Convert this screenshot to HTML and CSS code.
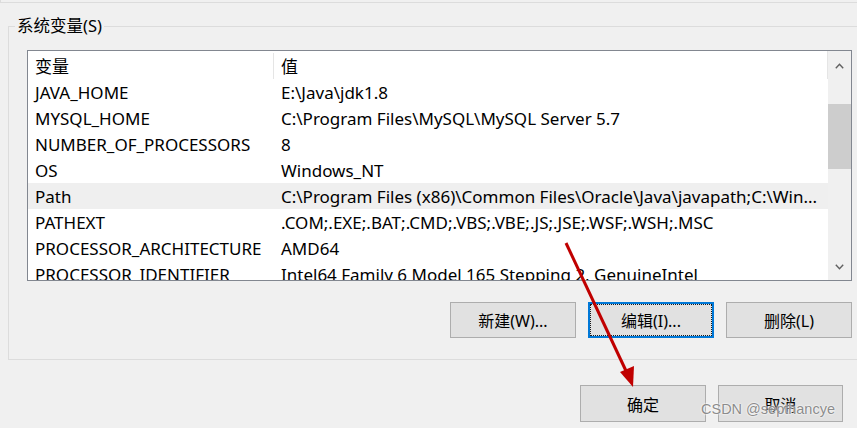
FILE: index.html
```
<!DOCTYPE html>
<html lang="zh-CN">
<head>
    <meta charset="UTF-8">
    <title>环境变量</title>
    <link rel="stylesheet" href="styles.css">
</head>
<body>
    <div class="prev-group"></div>

    <fieldset class="group">
        <legend>系统变量(S)</legend>

        <div class="listbox">
            <div class="list">
                <div class="row head">
                    <div class="cell name">变量</div>
                    <div class="cell value">值</div>
                </div>
                <div class="row"><div class="cell name">JAVA_HOME</div><div class="cell value">E:\Java\jdk1.8</div></div>
                <div class="row"><div class="cell name">MYSQL_HOME</div><div class="cell value">C:\Program Files\MySQL\MySQL Server 5.7</div></div>
                <div class="row"><div class="cell name">NUMBER_OF_PROCESSORS</div><div class="cell value">8</div></div>
                <div class="row"><div class="cell name">OS</div><div class="cell value">Windows_NT</div></div>
                <div class="row selected"><div class="cell name">Path</div><div class="cell value">C:\Program Files (x86)\Common Files\Oracle\Java\javapath;C:\Win...</div></div>
                <div class="row"><div class="cell name">PATHEXT</div><div class="cell value">.COM;.EXE;.BAT;.CMD;.VBS;.VBE;.JS;.JSE;.WSF;.WSH;.MSC</div></div>
                <div class="row"><div class="cell name">PROCESSOR_ARCHITECTURE</div><div class="cell value">AMD64</div></div>
                <div class="row"><div class="cell name">PROCESSOR_IDENTIFIER</div><div class="cell value">Intel64 Family 6 Model 165 Stepping 2, GenuineIntel</div></div>
            </div>
            <div class="scrollbar">
                <div class="arrow up">
                    <svg width="9" height="6" viewBox="0 0 9 6"><polyline points="0.8,5.2 4.5,1.3 8.2,5.2" fill="none" stroke="#606060" stroke-width="1.4"/></svg>
                </div>
                <div class="thumb"></div>
                <div class="track"></div>
                <div class="arrow down">
                    <svg width="9" height="6" viewBox="0 0 9 6"><polyline points="0.8,0.8 4.5,4.7 8.2,0.8" fill="none" stroke="#606060" stroke-width="1.4"/></svg>
                </div>
            </div>
        </div>

        <div class="buttons">
            <button class="btn">新建(W)...</button>
            <button class="btn focused">编辑(I)...</button>
            <button class="btn">删除(L)</button>
        </div>
    </fieldset>

    <div class="buttons dialog-buttons">
        <button class="btn">确定</button>
        <button class="btn">取消</button>
    </div>

    <!-- annotation arrow drawn on top of the screenshot -->
    <svg class="annotation" width="857" height="428" viewBox="0 0 857 428">
        <line x1="566" y1="243" x2="627" y2="373" stroke="#c00000" stroke-width="3"/>
        <polygon points="633,387 620,372 634,366" fill="#c00000"/>
    </svg>

    <div class="watermark">CSDN @septhancye</div>
</body>
</html>
```

FILE: styles.css
```
* {
    margin: 0;
    padding: 0;
    box-sizing: border-box;
}

body {
    position: relative;
    width: 857px;
    height: 428px;
    overflow: hidden;
    background-color: #f0f0f0;
    color: #000;
    font-family: "Noto Sans", "Noto Sans CJK SC", sans-serif;
    font-size: 16px;
}

.prev-group {
    height: 3px;
    border-bottom: 1px solid #dcdcdc;
    border-left: 1px solid #dcdcdc;
}

.group {
    margin: 12px -4px 0 8px;
    padding: 0 0 21px 18px;
    border: 1px solid #dcdcdc;
}

.group legend {
    margin-left: -12px;
    padding: 0 2px;
    font-size: 16.5px;
    line-height: 22px;
}

.listbox {
    display: flex;
    width: 825px;
    height: 231px;
    margin-top: 13px;
    background-color: #fff;
    border: 1px solid #828790;
}

.list {
    flex: 1;
    overflow: hidden;
    font-size: 17px;
}

.row {
    display: flex;
    height: 26px;
    align-items: center;
    white-space: nowrap;
}

.row.head {
    height: 28px;
    padding-top: 2px;
    border-right: 1px solid #e5e5e5;
}

.row.head .name {
    border-right: 1px solid #e5e5e5;
}

.row.selected {
    background-color: #efefef;
}

.cell {
    padding: 1px 0 0 7px;
    line-height: 25px;
}

.cell.name {
    width: 246px;
    flex-shrink: 0;
}

.cell.value {
    flex: 1;
}

.scrollbar {
    width: 23px;
    display: flex;
    flex-direction: column;
    background-color: #f0f0f0;
}

.arrow {
    display: flex;
    align-items: center;
    justify-content: center;
}

.arrow.up {
    height: 30px;
}

.arrow.down {
    height: 26px;
}

.thumb {
    height: 65px;
    margin-top: 23px;
    background-color: #cdcdcd;
}

.track {
    flex: 1;
}

.buttons {
    display: flex;
    justify-content: flex-end;
    gap: 12px;
    margin-top: 21px;
    width: 825px;
}

.btn {
    width: 126px;
    height: 36px;
    background-color: #e1e1e1;
    border: 1px solid #adadad;
    font-family: "Noto Sans", "Noto Sans CJK SC", sans-serif;
    font-size: 16px;
    color: #000;
}

.btn.focused {
    border-color: #0078d7;
    box-shadow: inset 0 0 0 1px #0078d7;
    outline: 1px dotted #1a1a1a;
    outline-offset: -3px;
}

.dialog-buttons {
    width: auto;
    margin: 25px 14px 0 0;
}

.dialog-buttons .btn {
    width: 126px;
    height: 37px;
}

.dialog-buttons .btn + .btn {
    width: 125px;
}

.annotation {
    position: absolute;
    left: 0;
    top: 0;
    pointer-events: none;
}

.watermark {
    position: absolute;
    left: 701px;
    top: 401px;
    font-family: "Liberation Sans", Arial, sans-serif;
    font-size: 14.5px;
    color: #8c8c8c;
    text-shadow: 0 0 2px #fff, 0 0 2px #fff;
}
```
